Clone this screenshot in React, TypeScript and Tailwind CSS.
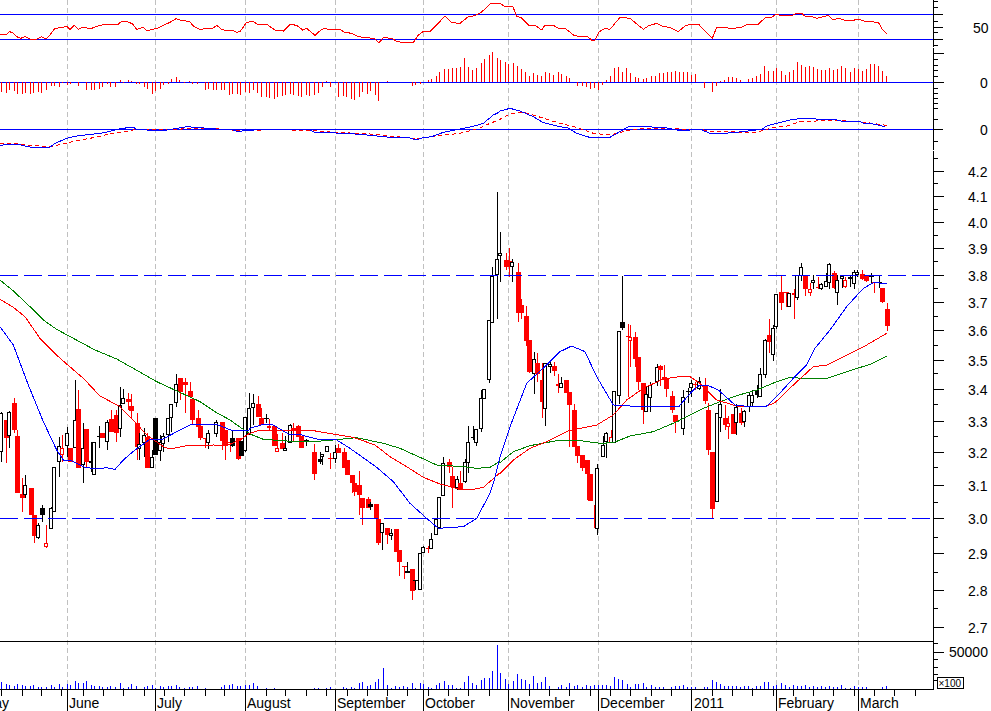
import React from "react";

type C = [string, number, number, number, number, number];
type P = number[];

// [kind, x, wickTop, wickBottom, bodyTop, bodyBottom] read in 3x crop coordinates
const c1: C[] = [
  ["w",3,425,575,430,545],["r",19,450,580,450,505],["w",27,422,533,425,497],["r",43,385,490,400,480],["r",52,480,670,498,670],
  ["r",67,625,725,672,683],["w",75,615,685,645,675],["r",93,655,735,655,735],["r",101,735,818,735,797],["w",115,760,808,765,805],
  ["b",126,705,757,714,735],["h",138,765,835,818,830],["w",153,710,778,715,778],["w",162,592,725,592,725],["w",177,500,622,528,576],
  ["h",187,495,575,535,555],["w",201,470,560,490,527],["r",211,534,575,534,575],["w",226,330,535,450,535],["r",235,360,593,417,593],
  ["w",250,458,640,535,585],["r",259,477,590,477,577],["b",273,515,605,572,578],["w",282,515,616,517,616],["b",298,468,535,497,502],
  ["r",307,489,504,489,504],["w",322,450,540,455,517],["r",334,420,485,447,485],["r",347,420,515,435,490],["w",360,350,500,405,478],
  ["w",369,358,403,385,403],["r",385,370,420,387,397],["r",394,372,447,408,422],["r",410,430,570,460,530],["w",417,490,570,523,537],
  ["w",433,475,560,495,518],["r",442,490,593,500,593],["w",457,540,593,562,593],["b",465,445,555,445,555],["w",481,495,572,515,542],
  ["w",489,490,545,497,523],["w",505,445,515,445,495],["w",512,403,485,403,443],["w",529,312,410,343,398],["r",540,324,390,324,365],
  ["r",555,325,428,335,345],["r",569,335,380,362,380],["r",577,387,465,387,450],["r",593,420,490,445,470],["r",601,468,510,468,505],
  ["r",615,505,535,505,508],["w",624,480,537,490,520],["w",648,450,500,455,493],["r",665,457,540,457,513],["r",675,480,570,480,527],
  ["r",690,515,545,515,520],["b",697,480,530,505,527],["r",713,505,570,505,568],["b",722,514,557,514,557],["w",735,442,545,442,543],["w",748,370,495,415,495],
];
const c2: C[] = [
  ["w",9,102,195,130,143],["r",25,108,170,132,170],["r",34,145,195,175,195],["b",49,162,190,175,178],["h",57,178,210,198,205],
  ["r",73,198,258,198,258],["h",80,222,275,265,275],["r",97,218,268,250,268],["w",105,228,272,265,272],["w",121,192,250,196,250],
  ["r",130,190,245,205,213],["r",145,195,232,198,232],["r",154,228,263,228,263],["b",169,238,258,240,245],["r",192,252,360,275,342],
  ["b",209,275,312,298,305],["w",216,285,315,283,292],["w",231,257,275,257,275],["r",241,278,328,295,297],["w",255,255,308,275,296],
  ["r",265,252,280,265,280],["r",281,265,323,276,323],["r",290,300,345,300,345],["r",305,345,398,345,368],["r",313,370,407,370,395],
  ["r",328,333,465,375,405],["r",337,415,495,415,443],["r",353,412,443,417,443],["b",360,425,450,433,440],["r",377,432,477,432,477],
  ["r",384,478,555,478,550],["w",397,490,570,490,520],["r",412,503,552,503,525],["w",423,508,540,520,529],["r",439,507,577,507,577],
  ["r",448,570,648,570,605],["r",463,617,656,617,619],["b",471,605,640,634,638],["r",487,628,720,628,692],["b",495,660,690,660,662],
  ["w",510,580,690,580,690],["w",518,558,580,560,580],["r",534,558,580,565,567],["w",543,520,568,538,568],["w",559,478,525,478,525],
  ["w",567,410,505,410,505],["w",580,290,408,310,408],["r",596,297,340,307,320],["r",606,320,443,348,380],["w",621,348,390,358,384],
  ["r",631,333,390,370,390],["w",645,297,370,307,365],["w",654,198,340,247,310],["b",670,198,240,230,235],["w",678,208,258,208,248],
  ["w",693,90,215,115,208],["w",702,88,118,88,118],
];
const c3: C[] = [
  ["w",177,420,610,420,600],["w",186,262,430,288,428],["w",201,37,417,238,284],["w",209,157,307,220,227],["r",229,220,270,240,260],
  ["r",237,205,290,243,262],["w",247,238,307,245,262],["r",265,250,425,275,398],["r",273,358,417,375,398],["r",289,378,497,408,483],
  ["r",297,480,580,480,577],["w",312,515,642,538,582],["r",321,520,605,548,582],["r",337,548,713,600,665],["w",345,548,738,548,688],
  ["w",359,545,580,553,562],["r",371,545,587,558,572],["r",385,582,640,612,618],["w",393,590,625,610,623],["r",409,600,640,600,640],
  ["r",418,635,800,635,675],["r",433,673,800,690,800],["r",442,798,850,798,827],["r",457,825,873,825,863],["r",472,840,960,840,882],
  ["r",480,882,962,882,962],["r",497,965,1045,975,1045],["w",502,853,1065,863,1047],["w",518,768,830,795,830],["w",527,755,833,760,785],
  ["h",542,750,790,770,790],["w",551,632,790,632,790],["w",567,452,672,452,648],["b",577,288,450,427,443],["r",593,433,650,467,468],
  ["h",600,435,560,472,482],["r",616,455,560,472,537],["r",625,532,630,532,605],["r",640,610,733,610,690],["w",648,620,695,643,695],
  ["w",661,605,695,615,655],["w",682,552,617,560,605],["r",689,555,617,557,570],["r",701,555,615,590,600],["r",709,593,650,593,627],["r",727,633,700,648,690],
  ["r",736,705,758,705,725],
];
const c4: C[] = [
  ["w",9,420,555,440,538],["b",25,415,460,423,427],["w",33,390,440,400,415],["r",46,395,420,402,404],["w",56,380,420,392,418],
  ["r",74,385,463,405,452],["r",83,460,615,480,600],["r",96,606,805,606,777],["w",110,490,755,490,755],["w",119,418,545,462,505],
  ["r",135,465,540,505,525],["h",143,498,567,518,530],["r",158,492,553,492,553],["w",167,462,555,470,518],["r",184,475,525,490,520],
  ["w",191,480,530,482,515],["w",207,430,485,435,470],["w",216,420,470,435,458],["b",231,405,445,420,435],["w",240,355,442,373,442],
  ["w",255,268,383,270,375],["r",266,207,310,255,275],["w",279,225,333,235,315],["w",288,133,238,133,232],["r",303,75,180,125,158],
  ["r",318,125,172,125,127],["w",326,130,172,130,170],["r",341,118,207,130,135],["w",350,75,150,75,143],["w",364,40,92,52,77],
  ["r",375,77,138,77,117],["h",389,100,138,118,130],["w",398,75,117,90,100],["r",414,80,118,110,115],["w",423,98,120,103,118],
  ["w",438,70,112,92,110],["w",447,40,117,42,100],["r",463,63,118,70,113],["w",471,75,165,90,130],["w",486,75,115,78,88],
  ["h",495,80,115,90,112],["w",510,75,110,80,87],["w",523,60,117,65,103],["w",532,60,80,65,75],["r",547,60,90,73,88],
  ["r",557,75,95,78,92],["b",574,68,103,78,82],["r",582,95,130,95,97],["b",598,75,115,95,97],["r",606,115,158,115,155],
  ["r",622,158,242,178,228],
];

const conv = (ox: number, oy: number, a: P) => {
  const out: string[] = [];
  for (let i = 0; i < a.length; i += 2) out.push(`${ox + a[i] / 3},${oy + a[i + 1] / 3}`);
  return out;
};
const pts = (...parts: string[][]) => parts.flat().join(" ");

const rsi = pts(
  conv(0, 0, [0,105,5,103,20,103,28,95,38,98,50,110,62,115,75,110,90,117,110,118,125,110,137,117,150,105,165,85,190,82,200,78,210,88,222,76,235,88,245,83,275,85,300,76,320,73,352,75,365,64,385,66,398,72,410,88,430,82,442,93,455,88,470,86,490,76,510,67,528,56,545,62,568,64,580,78,600,88,640,84,650,76,665,88,680,92,695,90,710,97,720,95,740,67,760,64,775,75,800,73,825,90,850,93,870,73,890,76,908,90,920,85,945,106,965,88,975,85,990,90,1020,89,1035,97,1055,100,1075,110,1110,114,1125,117,1137,128,1150,113,1175,115,1190,124,1210,128,1240,128,1255,105,1270,94,1290,95,1310,75,1335,48,1355,68,1380,70,1405,50,1425,47,1445,36,1470,12,1497,10]),
  conv(500, 0, [0,10,12,18,38,18,50,50,62,52,85,75,105,75,125,90,135,75,158,75,175,85,195,85,222,106,240,110,262,110,275,120,285,120,298,95,315,85,330,88,360,52,390,55,430,88,445,78,470,70,490,80,510,82,535,95,555,78,575,72,595,72,637,115,650,82,700,85,725,82,745,72,775,72,797,52,815,52,828,43,850,48,880,45,890,40,905,40,917,50,935,50,950,55,985,46,1000,60,1015,55,1035,61,1060,61,1075,57,1095,64,1135,67,1147,88,1160,102])
);

const histA: P = [3,275,19,278,27,270,43,273,52,282,67,282,76,280,91,282,100,278,115,275,124,278,139,270,154,258,163,258,178,261,187,248,202,256,211,252,235,258,259,270,274,270,283,270,298,267,307,261,322,252,331,261,346,261,361,240,370,248,385,240,394,243,409,251,418,251,433,261,442,267,457,282,466,273,481,267,490,255,505,252,514,237,529,231,538,240,553,248,568,243,577,251,592,251,616,270,625,267,640,270,649,270,664,270,673,270,688,285,697,282,712,282,721,285,736,276,748,279,760,270,772,279,784,291,799,291,808,294,823,297,832,291,847,288,856,285,871,282,880,285,895,288,904,291,919,285,928,288,943,285,955,279,967,261,979,243,991,261,1015,291,1030,288,1039,291,1054,297,1063,300,1078,291,1087,276,1102,282,1111,273,1126,285,1135,303,1162,244,1237,258,1246,255,1261,252,1285,240,1294,237,1309,228,1318,216,1333,207,1345,207,1357,204,1369,204,1381,201,1393,174,1405,201,1417,210,1429,204,1444,189,1453,177,1468,165,1477,156,1492,174];
const histB: P = [1,180,16,186,25,192,40,189,52,198,64,207,76,216,88,228,100,219,112,225,124,228,136,216,148,219,160,225,175,216,184,222,199,228,208,234,232,258,247,258,259,261,271,267,283,264,295,270,307,255,319,240,331,228,343,204,355,201,367,216,379,204,391,219,406,231,415,234,430,237,439,234,454,228,466,228,478,219,490,219,502,216,514,216,526,213,538,216,550,216,562,216,574,225,586,222,613,264,637,276,649,258,661,243,673,240,685,231,697,231,709,234,721,240,745,237,757,234,769,228,781,222,793,198,805,213,820,213,829,204,844,213,856,225,868,216,880,210,892,186,904,195,916,201,928,198,940,201,952,207,964,210,976,210,988,204,1000,210,1012,207,1024,198,1036,204,1051,216,1063,204,1075,207,1087,213,1099,207,1111,192,1123,192,1135,198,1147,213,1159,228];

const macdBlue = pts(
  conv(0, 0, [0,436,25,433,55,433,70,437,90,441,150,441,165,430,200,415,225,409,245,406,300,400,330,394,365,385,400,382,410,388,440,390,500,390,530,385,560,380,600,383,660,388,700,390,715,396,735,391,820,388,930,390,945,397,1040,400,1090,404,1130,408,1170,412,1230,414,1247,420,1270,413,1295,410,1330,397,1380,387,1420,379,1450,370,1480,345,1497,337]),
  conv(500, 0, [0,333,30,325,60,333,100,350,130,368,180,380,205,384,230,400,275,414,330,412,385,380,420,380,490,382,530,390,570,390,600,388,635,402,700,398,745,393,785,388,800,378,830,370,870,360,905,355,970,358,1010,360,1030,365,1080,365,1090,370,1120,372,1155,380])
);
const macdRed = pts(
  conv(0, 0, [0,430,50,431,90,436,150,440,190,432,230,422,270,415,330,402,390,392,410,388,500,390,560,386,660,387,720,392,830,389,950,392,1000,397,1100,401,1200,411,1250,417,1290,410,1380,400,1440,384,1470,370,1497,360]),
  conv(500, 0, [5,355,30,342,70,337,115,350,170,367,230,382,280,400,330,405,390,390,430,385,600,388,640,395,770,397,820,382,860,378,900,365,1000,361,1080,365,1160,376])
);

const maGreen = pts(
  conv(0, 270, [0,30,40,63,90,110,130,150,170,178,220,205,285,240,350,267,400,295,470,335,520,358,600,395,650,428,690,450,725,475,748,490]),
  conv(250, 360, [0,222,40,238,140,245,190,245,250,240,320,233,400,250,450,265,510,292,560,315,640,320,680,325,720,322,748,305]),
  conv(430, 180, [210,848,250,815,300,797,380,782,450,782,510,790,550,788,600,768,670,755,748,722]),
  conv(680, 250, [0,510,70,475,120,455,170,437,230,420,290,395,330,382,375,386,435,387,500,365,570,343,620,318])
);
const maRed = pts(
  conv(0, 270, [0,88,40,112,75,140,120,205,175,260,200,282,250,325,300,378,360,410,410,462,440,495,490,530,510,537,560,527,640,525,680,527,720,510,748,490]),
  conv(250, 360, [0,220,30,210,180,210,235,220,310,232,375,255,420,290,470,320,520,352,570,372,620,385,660,390,700,382,748,340]),
  conv(430, 180, [210,880,250,840,300,805,350,785,415,752,500,735,550,705,590,660,640,625,700,597,748,590]),
  conv(680, 250, [0,380,30,380,60,400,110,450,170,468,255,470,285,458,340,405,400,350,440,345,500,315,560,285,620,250])
);
const maBlue = pts(
  conv(0, 270, [0,170,40,225,85,345,130,455,170,540,190,570,215,573,255,592,290,597,320,593,345,598,370,570,405,540,450,508,490,507,530,485,575,463,650,463,695,481,748,480]),
  conv(250, 360, [0,205,40,193,70,195,115,222,155,225,200,237,260,240,300,265,380,322,430,365,480,430,530,475,565,505,640,500,680,475,720,400]),
  conv(430, 180, [190,910,210,830,240,740,290,610,350,555,390,515,425,498,465,515,500,590,550,675,600,678,748,678]),
  conv(680, 250, [0,465,40,420,60,405,85,407,115,420,165,465,220,471,260,468,290,440,340,385,380,345,405,295,450,240,500,170,550,115,580,98,620,100])
);

const volA: P = [3,156,19,162,27,165,43,168,51,162,67,165,75,168,91,168,99,165,115,171,123,171,139,171,154,165,162,171,178,162,186,171,202,162,211,165,226,153,235,159,250,159,259,153,274,165,282,168,298,168,307,171,322,171,331,168,346,171,361,159,370,174,385,171,394,162,409,168,433,171,442,168,457,165,465,174,481,168,489,171,505,168,513,168,529,165,538,171,553,174,568,171,577,171,592,168,616,174,664,171,673,165,688,165,697,162,712,168,721,168,736,165,748,165,760,159,772,168,799,174,823,175,943,174,955,174,980,174,991,171,1030,171,1039,174,1054,171,1063,174,1078,159,1087,156,1102,168,1111,165,1126,156,1135,147,1150,114,1162,165,1175,174,1186,168,1198,171,1210,168,1222,171,1237,159,1246,174,1261,159,1270,162,1285,171,1294,174,1309,165,1318,159,1333,153,1345,165,1357,165,1369,174,1381,174,1393,156,1405,138,1417,159,1429,165,1444,150,1453,144,1468,144,1477,123,1492,45];
const volB: P = [1,129,16,147,25,162,40,153,52,132,64,147,76,150,88,162,100,138,112,159,124,156,136,141,148,168,175,171,184,165,199,171,208,159,223,168,232,165,247,171,259,165,271,168,283,165,295,165,307,165,319,165,331,168,343,141,355,147,367,150,382,162,391,171,406,162,415,162,430,159,439,171,454,165,466,171,478,171,490,171,514,171,526,168,538,168,550,165,562,171,574,171,586,171,613,171,622,171,637,150,649,156,661,162,673,168,685,168,697,168,709,168,721,171,733,168,745,168,757,174,769,168,781,168,793,156,805,156,820,168,829,165,844,159,856,165,868,171,880,165,892,168,904,168,916,165,928,171,940,168,952,171,964,168,976,171,988,168,1000,171,1012,171,1024,165,1036,174,1051,174,1063,168,1075,171,1087,171,1099,171,1147,171,1159,168];

const months = [67, 155, 245, 335, 423, 508, 598, 691, 776, 858];
const monthLabels: [string, number][] = [["May",-17.5],["June",69],["July",157],["August",247],["September",337],["October",425],["November",510],["December",600],["2011",694],["February",778],["March",860]];
const bottomTicks = [1,22,41,61,83,103,123,144,164,184,205,224,245,266,285,306,326,347,367,387,407,428,448,468,489,529,549,569,590,610,630,651,671,691,712,732,752,773,793,813,833,854,874,894,915];

const Candles = ({ data, ox, oy }: { data: C[]; ox: number; oy: number }) => (
  <>
    {data.map(([k, x3, wt, wb, bt, bb], i) => {
      const cx = Math.round(ox + x3 / 3);
      const red = k === "r" || k === "h";
      const col = red ? "#ff0000" : "#000000";
      const w0 = Math.round(oy + wt / 3);
      const w1 = Math.round(oy + wb / 3);
      const b0 = Math.round(oy + bt / 3);
      const b1 = Math.max(b0 + 1, Math.round(oy + bb / 3));
      const tiny = b1 - b0 < 2;
      return (
        <g key={i}>
          <rect x={cx} y={w0} width={1} height={Math.max(1, w1 - w0)} fill={col} />
          {k === "r" || k === "b" ? (
            <rect x={cx - 2} y={b0} width={5} height={b1 - b0} fill={col} />
          ) : tiny ? (
            <rect x={cx - 1} y={b0} width={3} height={1} fill={col} />
          ) : (
            <rect x={cx - 1.5} y={b0 + 0.5} width={3} height={b1 - b0 - 1} fill="#ffffff" stroke={col} strokeWidth={1} />
          )}
        </g>
      );
    })}
  </>
);

const Bars = ({ a, ox, base, color }: { a: P; ox: number; base: number; color: string }) => {
  const out: React.ReactElement[] = [];
  for (let i = 0; i < a.length; i += 2) {
    const x = Math.floor(ox + a[i] / 3);
    const y = Math.round(a[i + 1] / 3) + (base > 600 ? 630 : 0);
    const top = Math.min(y, base);
    out.push(<rect key={i} x={x} y={top} width={1} height={Math.max(1, Math.abs(base - y))} fill={color} />);
  }
  return <>{out}</>;
};

const priceLabels: [string, number][] = [["4.2",171],["4.1",196],["4.0",222],["3.9",248],["3.8",275],["3.7",302],["3.6",330],["3.5",360],["3.4",389],["3.3",421],["3.2",452],["3.1",485],["3.0",518],["2.9",553],["2.8",590],["2.7",627]];
const minorTicks = [1,7,21,32,45,59,65,70,76,88,93,98,103,108,119,141,158,183,209,235,261,288,316,345,373,404,436,467,502,537,572,608,643,659,667,674,680];
const longTicks = [14,27,39,53,82,129];

export default function App() {
  return (
    <div className="w-[991px] h-[711px] bg-white overflow-hidden">
      <svg width={991} height={711} viewBox="0 0 991 711" className="block font-['Liberation_Sans',Arial,sans-serif]" shapeRendering="crispEdges">
        {months.map((x) => (
          <line key={x} x1={x + 0.5} x2={x + 0.5} y1={0} y2={689} stroke="#c0c0c0" strokeWidth={1} strokeDasharray="5 3" />
        ))}

        {[14, 39, 82, 129].map((y) => (
          <rect key={y} x={0} y={y} width={933} height={1} fill="#0000ff" />
        ))}
        <rect x={0} y={641} width={933} height={1} fill="#000000" />

        <polyline points={rsi} fill="none" stroke="#ff0000" strokeWidth={1} />
        <Bars a={histA} ox={0} base={82} color="#ff0000" />
        <Bars a={histB} ox={500} base={82} color="#ff0000" />
        <polyline points={macdRed} fill="none" stroke="#ff0000" strokeWidth={1} strokeDasharray="4 3" />
        <polyline points={macdBlue} fill="none" stroke="#0000ff" strokeWidth={1} />

        <Candles data={c1} ox={0} oy={270} />
        <Candles data={c2} ox={250} oy={360} />
        <Candles data={c3} ox={430} oy={180} />
        <Candles data={c4} ox={680} oy={250} />

        <line x1={0} x2={933} y1={275.5} y2={275.5} stroke="#0000ff" strokeWidth={1} strokeDasharray="18 6" />
        <line x1={0} x2={933} y1={518.5} y2={518.5} stroke="#0000ff" strokeWidth={1} strokeDasharray="18 6" />

        <polyline points={maGreen} fill="none" stroke="#008000" strokeWidth={1} />
        <polyline points={maRed} fill="none" stroke="#ff0000" strokeWidth={1} />
        <polyline points={maBlue} fill="none" stroke="#0000ff" strokeWidth={1} />

        <Bars a={volA} ox={0} base={689} color="#0000ff" />
        <Bars a={volB} ox={500} base={689} color="#0000ff" />

        <rect x={933} y={0} width={1} height={47} fill="#000000" />
        <rect x={933} y={48} width={1} height={102} fill="#000000" />
        <rect x={933} y={151} width={1} height={538} fill="#000000" />
        <rect x={0} y={689} width={934} height={1} fill="#000000" />
        {minorTicks.map((y) => (
          <rect key={y} x={933} y={y} width={5} height={1} fill="#000000" />
        ))}
        {longTicks.map((y) => (
          <rect key={y} x={933} y={y} width={y === 53 || y === 82 ? 11 : 10} height={1} fill="#000000" />
        ))}
        {priceLabels.map(([, y]) => (
          <rect key={y} x={933} y={y} width={11} height={1} fill="#000000" />
        ))}
        <rect x={933} y={652} width={11} height={1} fill="#000000" />
        {bottomTicks.map((x) => (
          <rect key={x} x={x} y={689} width={1} height={7} fill="#000000" />
        ))}
        {months.map((x) => (
          <rect key={x} x={x} y={689} width={1} height={22} fill="#000000" />
        ))}

        <g fill="#000000" className="text-[14px]">
          <text x={973} y={33}>50</text>
          <text x={980} y={88}>0</text>
          <text x={980} y={135}>0</text>
          {priceLabels.map(([t, y]) => (
            <text key={t} x={968} y={y + 6}>{t}</text>
          ))}
          <text x={949} y={657}>50000</text>
          {monthLabels.map(([t, x]) => (
            <text key={t} x={x} y={708}>{t}</text>
          ))}
        </g>

        <rect x={937.5} y={677.5} width={26} height={11} fill="#ffffff" stroke="#000000" strokeWidth={1} />
        <text x={938.5} y={686.5} fill="#000000" className="text-[10px]">×100</text>
      </svg>
    </div>
  );
}
